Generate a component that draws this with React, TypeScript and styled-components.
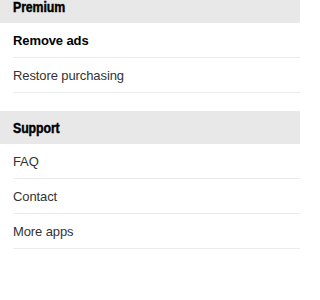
import React from "react";
import styled, { createGlobalStyle } from "styled-components";

const Global = createGlobalStyle`
  html, body { margin: 0; padding: 0; background: #ffffff; overflow: hidden; }
  body { font-family: "Liberation Sans", Arial, sans-serif; }
`;

const Screen = styled.div`
  width: 300px;
  height: 300px;
  overflow: hidden;
  background: #ffffff;
`;

const List = styled.div`
  display: flex;
  flex-direction: column;
  margin-top: -10px;
`;

const Section = styled.section<{ $gap?: boolean }>`
  display: flex;
  flex-direction: column;
  margin-top: ${(p) => (p.$gap ? "18px" : "0")};
`;

const Header = styled.div`
  height: 33px;
  box-sizing: border-box;
  background: #e8e8e8;
  display: flex;
  align-items: center;
  padding: 1px 13px 0;
`;

const HeaderTitle = styled.span`
  display: inline-block;
  font-family: "Liberation Sans", Arial, sans-serif;
  font-weight: 700;
  font-size: 14.5px;
  letter-spacing: -0.1px;
  color: #000;
  -webkit-text-stroke: 0.45px #000;
  transform: scaleX(0.85);
  transform-origin: left center;
`;

const Row = styled.div<{ $bold?: boolean }>`
  height: 35px;
  box-sizing: border-box;
  margin-left: 13px;
  padding-top: 1px;
  border-bottom: 1px solid #ececec;
  display: flex;
  align-items: center;
  font-size: 13px;
  letter-spacing: -0.1px;
  font-weight: ${(p) => (p.$bold ? 700 : 400)};
  color: ${(p) => (p.$bold ? "#000" : "#333")};
`;

export default function App() {
  return (
    <Screen>
      <Global />
      <List>
        <Section>
          <Header>
            <HeaderTitle>Premium</HeaderTitle>
          </Header>
          <Row $bold>Remove ads</Row>
          <Row>Restore purchasing</Row>
        </Section>
        <Section $gap>
          <Header>
            <HeaderTitle>Support</HeaderTitle>
          </Header>
          <Row>FAQ</Row>
          <Row>Contact</Row>
          <Row>More apps</Row>
        </Section>
      </List>
    </Screen>
  );
}
